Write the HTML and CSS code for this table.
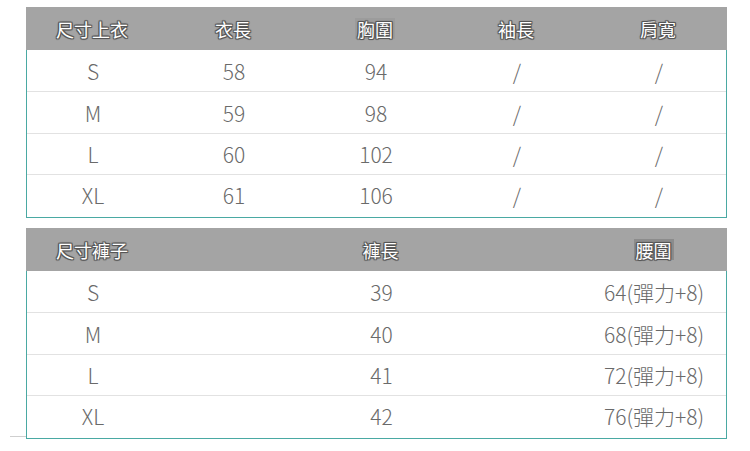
FILE: index.html
```html
<!DOCTYPE html>
<html lang="zh-Hant">
<head>
<meta charset="utf-8">
<title>尺寸表</title>
<link rel="stylesheet" href="styles.css">
</head>
<body>
<main class="page">
  <section class="table top">
    <div class="row head">
      <div>尺寸上衣</div><div>衣長</div><div><span class="box light">胸圍</span></div><div>袖長</div><div>肩寬</div>
    </div>
    <div class="body">
      <div class="row"><div>S</div><div>58</div><div>94</div><div>/</div><div>/</div></div>
      <div class="row"><div>M</div><div>59</div><div>98</div><div>/</div><div>/</div></div>
      <div class="row"><div>L</div><div>60</div><div>102</div><div>/</div><div>/</div></div>
      <div class="row"><div>XL</div><div>61</div><div>106</div><div>/</div><div>/</div></div>
    </div>
  </section>
  <section class="table bottom">
    <div class="row head">
      <div>尺寸褲子</div><div>褲長</div><div class="waist-head"><span class="box">腰圍</span></div>
    </div>
    <div class="body">
      <div class="row"><div>S</div><div>39</div><div class="waist">64(彈力+8)</div></div>
      <div class="row"><div>M</div><div>40</div><div class="waist">68(彈力+8)</div></div>
      <div class="row"><div>L</div><div>41</div><div class="waist">72(彈力+8)</div></div>
      <div class="row"><div>XL</div><div>42</div><div class="waist">76(彈力+8)</div></div>
    </div>
  </section>
</main>
</body>
</html>
```
FILE: styles.css
```css
* { box-sizing: border-box; }
html, body { margin: 0; padding: 0; background: #fff; }
body {
  width: 750px;
  height: 451px;
  overflow: hidden;
  font-family: "Noto Sans CJK TC", "Noto Sans", sans-serif;
}
.page {
  display: flex;
  flex-direction: column;
  gap: 10px;
  padding: 7px 0 0 26px;
}
.table {
  width: 701px;
  position: relative;
}
.row {
  display: grid;
  height: 42px;
  align-items: center;
  text-align: center;
  border-bottom: 1px solid #e2e2e2;
  font-size: 21px;
  font-weight: 300;
  color: #6a6a6a;
  line-height: 1;
  white-space: nowrap;
}
.row > div { padding-top: 2px; }
.body .row:nth-child(3) { height: 41px; }
.body .row:nth-child(3) > div { padding-top: 0; }
.body .row:nth-child(4) > div { padding-top: 0; margin-top: -2px; }
.top .row { grid-template-columns: 132px 150px 134px 148px 136px; }
.bottom .row { grid-template-columns: 132px 445px 123px; }
.bottom .row > .waist { text-align: left; }
.bottom .row > .waist-head { padding-right: 22px; }
.body {
  border-left: 1px solid #4aa9a3;
  border-right: 1px solid #4aa9a3;
  border-bottom: 1px solid #4aa9a3;
  width: 701px;
}
.body .row:last-child { border-bottom: none; height: 42px; }
.row.head {
  height: 43px;
  background: #a4a4a4;
  border-bottom: none;
  font-size: 18px;
  font-weight: 400;
  color: #fff;
  text-shadow: 1px 0 1px #555, -1px 0 1px #555, 0 1px 1px #555, 0 -1px 1px #555,
    1px 1px 0 #666, -1px -1px 0 #666, 1px -1px 0 #666, -1px 1px 0 #666;
}
.row.head > div { padding-top: 0; }
.box {
  display: inline-block;
  padding: 2px 2px 1px;
  background: #8c8c8c;
}
.box.light { background: #9c9c9c; }
.bottom::before {
  content: "";
  position: absolute;
  left: -16px;
  bottom: 2px;
  width: 16px;
  height: 1px;
  background: #cfcfcf;
}
```
